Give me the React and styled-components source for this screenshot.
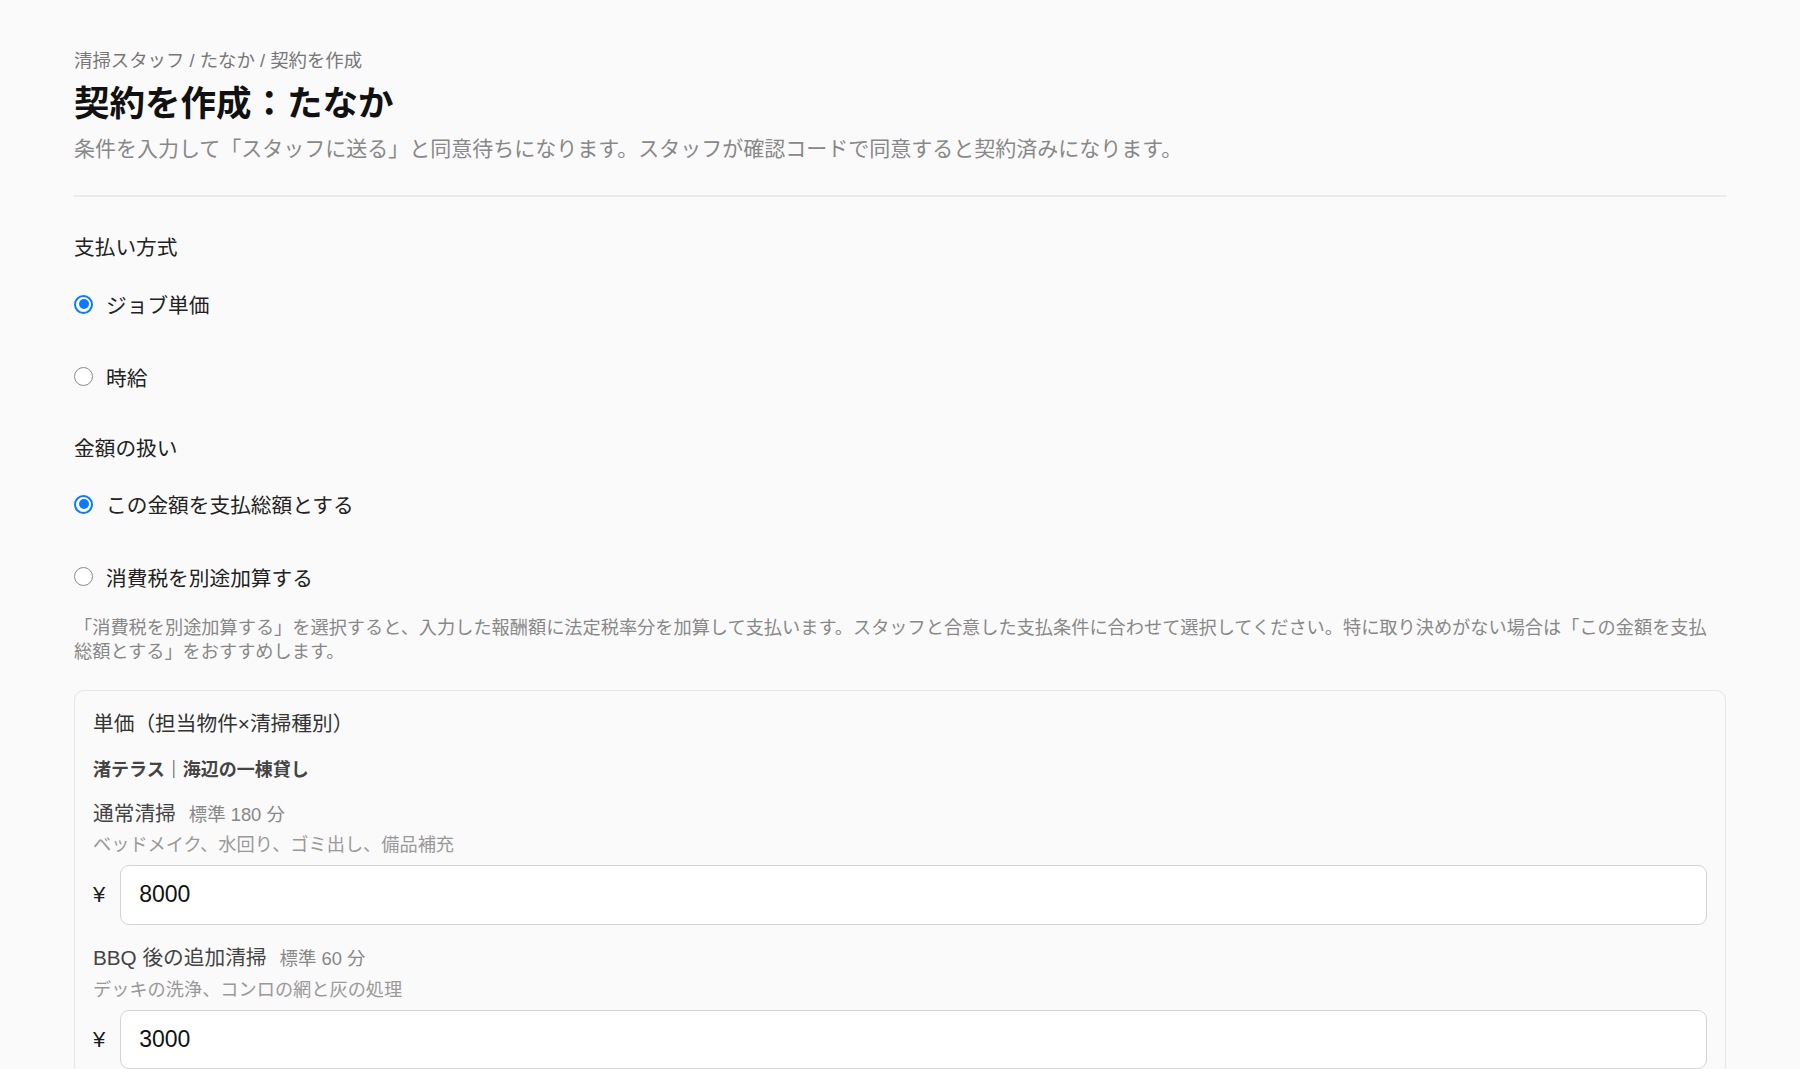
import React from "react";
import styled, { createGlobalStyle } from "styled-components";

const GlobalStyle = createGlobalStyle`
  html, body {
    margin: 0;
    padding: 0;
    background: #fafafa;
  }
  body {
    font-family: "Liberation Sans", "Noto Sans CJK JP", sans-serif;
    color: #222;
    -webkit-font-smoothing: antialiased;
  }
  *, *::before, *::after { box-sizing: border-box; }
`;

const Page = styled.main`
  padding: 47px 74px 60px;
`;

const Breadcrumb = styled.nav`
  font-size: 18.4px;
  line-height: 28px;
  color: #777;
`;

const Title = styled.h1`
  margin: 6px 0 0;
  font-size: 35.5px;
  line-height: 46px;
  font-weight: 700;
  color: #111;
`;

const Lead = styled.p`
  margin: 7px 0 0;
  font-size: 21px;
  line-height: 30px;
  color: #888;
`;

const Divider = styled.hr`
  margin: 31px 0 0;
  height: 0;
  border: 0;
  border-top: 2px solid #ebebeb;
`;

const Section = styled.section`
  margin-top: ${(p) => p.$top}px;
`;

const SectionLabel = styled.div`
  font-size: 20.7px;
  line-height: 30px;
  color: #222;
`;

const RadioList = styled.div`
  display: flex;
  flex-direction: column;
  gap: 28.5px;
  margin-top: ${(p) => p.$top}px;
`;

const RadioRow = styled.label`
  display: flex;
  align-items: center;
  gap: 13px;
  height: 44px;
  font-size: 20.7px;
  color: #222;
  cursor: pointer;
`;

const HiddenInput = styled.input`
  position: absolute;
  opacity: 0;
  width: 0;
  height: 0;
  margin: 0;
`;

const RadioMark = styled.span`
  flex: none;
  width: 19px;
  height: 19px;
  border-radius: 50%;
  background: #fff;
  border: ${(p) => (p.$checked ? "2.5px solid #0a7bff" : "1.4px solid #8a8a8a")};
  display: flex;
  align-items: center;
  justify-content: center;
  &::after {
    content: "";
    width: 10px;
    height: 10px;
    border-radius: 50%;
    background: ${(p) => (p.$checked ? "#0a7bff" : "transparent")};
  }
`;

const Note = styled.p`
  margin: 17px 0 0;
  max-width: 1640px;
  font-size: 18.2px;
  line-height: 24px;
  color: #888;
`;

const Card = styled.section`
  margin-top: 26px;
  border: 1.5px solid #e6e6e6;
  border-radius: 10px;
  background: #fafafa;
  padding: 18px 18px 40px;
`;

const CardTitle = styled.h2`
  margin: 0;
  font-size: 20.7px;
  line-height: 30px;
  font-weight: 400;
  color: #333;
`;

const PropertyName = styled.h3`
  margin: 18.5px 0 0;
  font-size: 18px;
  line-height: 27px;
  font-weight: 700;
  color: #444;
`;

const ItemList = styled.div`
  display: flex;
  flex-direction: column;
  gap: 18.5px;
  margin-top: 14.5px;
`;

const Item = styled.div`
  display: flex;
  flex-direction: column;
`;

const TypeRow = styled.div`
  font-size: 20.7px;
  line-height: 30px;
  color: #444;
`;

const Std = styled.span`
  margin-left: 13px;
  font-size: 18.4px;
  color: #888;
`;

const TypeDesc = styled.div`
  margin-top: 3.5px;
  font-size: 18.2px;
  line-height: 24px;
  color: #999;
`;

const PriceRow = styled.div`
  display: flex;
  align-items: center;
  gap: 15px;
  margin-top: 8.3px;
`;

const Yen = styled.span`
  font-size: 22px;
  color: #1a1a1a;
`;

const PriceInput = styled.input`
  flex: 1;
  min-width: 0;
  height: 59.3px;
  border: 1.5px solid #d4d4d4;
  border-radius: 9px;
  background: #fff;
  padding: 0 18px;
  font-family: "Liberation Sans", "Noto Sans CJK JP", sans-serif;
  font-size: 23px;
  color: #111;
  outline: none;
`;

function Radio({ name, checked, children }) {
  return (
    <RadioRow>
      <HiddenInput type="radio" name={name} defaultChecked={checked} />
      <RadioMark $checked={checked} />
      <span>{children}</span>
    </RadioRow>
  );
}

const items = [
  { name: "通常清掃", std: "標準 180 分", desc: "ベッドメイク、水回り、ゴミ出し、備品補充", price: "8000" },
  { name: "BBQ 後の追加清掃", std: "標準 60 分", desc: "デッキの洗浄、コンロの網と灰の処理", price: "3000" },
];

export default function App() {
  return (
    <>
      <GlobalStyle />
      <Page>
        <Breadcrumb>清掃スタッフ / たなか / 契約を作成</Breadcrumb>
        <Title>契約を作成：たなか</Title>
        <Lead>
          条件を入力して「スタッフに送る」と同意待ちになります。スタッフが確認コードで同意すると契約済みになります。
        </Lead>
        <Divider />

        <Section $top={36}>
          <SectionLabel>支払い方式</SectionLabel>
          <RadioList $top={19}>
            <Radio name="pay" checked>ジョブ単価</Radio>
            <Radio name="pay">時給</Radio>
          </RadioList>
        </Section>

        <Section $top={35.5}>
          <SectionLabel>金額の扱い</SectionLabel>
          <RadioList $top={18}>
            <Radio name="tax" checked>この金額を支払総額とする</Radio>
            <Radio name="tax">消費税を別途加算する</Radio>
          </RadioList>
          <Note>
            「消費税を別途加算する」を選択すると、入力した報酬額に法定税率分を加算して支払います。スタッフと合意した支払条件に合わせて選択してください。特に取り決めがない場合は「この金額を支払総額とする」をおすすめします。
          </Note>
        </Section>

        <Card>
          <CardTitle>単価（担当物件×清掃種別）</CardTitle>
          <PropertyName>渚テラス｜海辺の一棟貸し</PropertyName>
          <ItemList>
            {items.map((it) => (
              <Item key={it.name}>
                <TypeRow>
                  {it.name}
                  <Std>{it.std}</Std>
                </TypeRow>
                <TypeDesc>{it.desc}</TypeDesc>
                <PriceRow>
                  <Yen>¥</Yen>
                  <PriceInput type="text" defaultValue={it.price} />
                </PriceRow>
              </Item>
            ))}
          </ItemList>
        </Card>
      </Page>
    </>
  );
}
